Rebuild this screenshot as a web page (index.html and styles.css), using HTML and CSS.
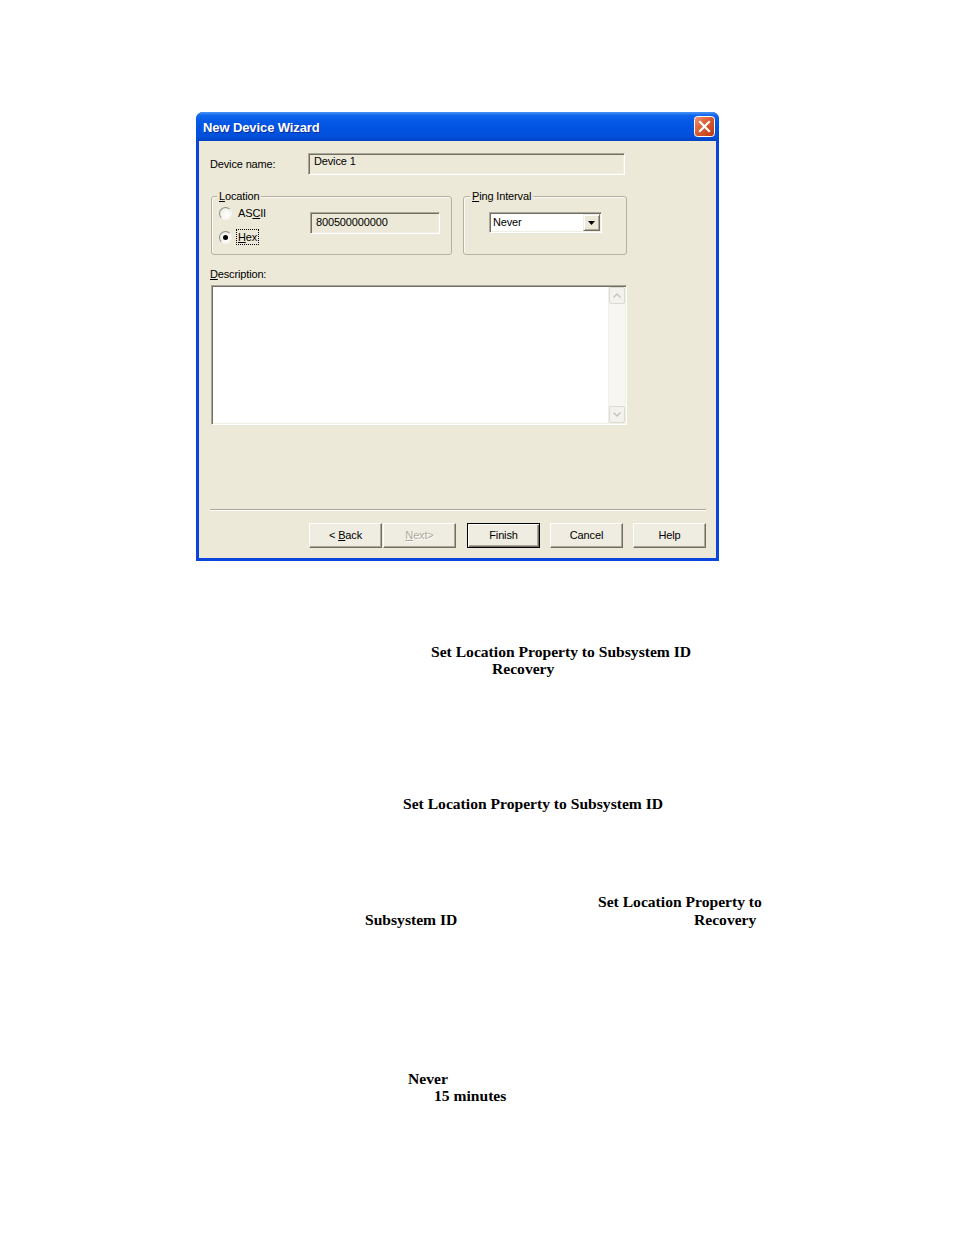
FILE: index.html
```html
<!DOCTYPE html>
<html>
<head>
<meta charset="utf-8">
<title>New Device Wizard</title>
<link rel="stylesheet" href="styles.css">
</head>
<body>
<div class="page">
  <div class="dialog">
    <div class="titlebar">
      <span class="title">New Device Wizard</span>
      <span class="close">
        <svg width="21" height="21" viewBox="0 0 21 21">
          <defs>
            <linearGradient id="cg" x1="0" y1="0" x2="1" y2="1">
              <stop offset="0" stop-color="#EE9470"/>
              <stop offset="0.5" stop-color="#D9582F"/>
              <stop offset="1" stop-color="#B83A14"/>
            </linearGradient>
          </defs>
          <rect x="0.5" y="0.5" width="20" height="20" rx="3" fill="url(#cg)" stroke="#ffffff"/>
          <path d="M6 6 L15 15 M15 6 L6 15" stroke="#ffffff" stroke-width="2.2" stroke-linecap="square"/>
        </svg>
      </span>
    </div>
    <div class="body">
      <div class="row-name">
        <span class="lbl-name">Device name:</span>
        <div class="textbox name-box">Device 1</div>
      </div>
      <div class="groups">
        <div class="group loc">
          <span class="legend"><u>L</u>ocation</span>
          <div class="loc-grid">
            <div class="radios">
              <div class="radio-row"><span class="radio"></span><span class="rlabel">AS<u>C</u>II</span></div>
              <div class="radio-row"><span class="radio checked"></span><span class="rlabel focus"><u>H</u>ex</span></div>
            </div>
            <div class="textbox loc-box">800500000000</div>
          </div>
        </div>
        <div class="group ping">
          <span class="legend"><u>P</u>ing Interval</span>
          <div class="combo">
            <span class="combo-text">Never</span>
            <span class="combo-btn">
              <svg width="7" height="4" viewBox="0 0 7 4"><path d="M0 0 H7 L3.5 4 Z" fill="#000"/></svg>
            </span>
          </div>
        </div>
      </div>
      <div class="desc-label"><u>D</u>escription:</div>
      <div class="textarea">
        <div class="ta-content"></div>
        <div class="scrollbar">
          <span class="sb-btn">
            <svg width="8" height="5" viewBox="0 0 8 5"><path d="M0.5 4.5 L4 1 L7.5 4.5" fill="none" stroke="#C4C2B6" stroke-width="1.3"/></svg>
          </span>
          <span class="sb-track"></span>
          <span class="sb-btn">
            <svg width="8" height="5" viewBox="0 0 8 5"><path d="M0.5 0.5 L4 4 L7.5 0.5" fill="none" stroke="#C4C2B6" stroke-width="1.3"/></svg>
          </span>
        </div>
      </div>
      <div class="separator"></div>
      <div class="buttons">
        <div class="btn-pair">
          <span class="btn"><span>&lt; <u>B</u>ack</span></span>
          <span class="btn disabled"><span><u>N</u>ext&gt;</span></span>
        </div>
        <span class="btn default">Finish</span>
        <span class="btn">Cancel</span>
        <span class="btn">Help</span>
      </div>
    </div>
  </div>

  <div class="doc">
    <div class="blk b1">
      <div class="ln l-431">Set Location Property to Subsystem ID</div>
      <div class="ln l-492">Recovery</div>
    </div>
    <div class="blk b2">
      <div class="ln l-403">Set Location Property to Subsystem ID</div>
    </div>
    <div class="blk b3">
      <div class="ln l-598">Set Location Property to</div>
      <div class="ln split">
        <span class="split-a">Subsystem ID</span>
        <span class="split-b">Recovery</span>
      </div>
    </div>
    <div class="blk b4">
      <div class="ln l-408">Never</div>
      <div class="ln l-434">15 minutes</div>
    </div>
  </div>
</div>
</body>
</html>
```

FILE: styles.css
```css
html, body {
  margin: 0;
  padding: 0;
  background: #ffffff;
}

.page {
  width: 954px;
  min-height: 1235px;
  padding-top: 112px;
  box-sizing: border-box;
}

/* ---------- dialog ---------- */
.dialog {
  margin-left: 196px;
  width: 523px;
  height: 449px;
  display: flex;
  flex-direction: column;
  background: #0A46DB;
  border-radius: 7px 7px 0 0;
  overflow: hidden;
  font-family: "Liberation Sans", Arial, sans-serif;
  font-size: 11px;
  letter-spacing: -0.15px;
  color: #000;
}

.titlebar {
  height: 29px;
  flex: none;
  display: flex;
  align-items: center;
  justify-content: space-between;
  padding: 0 4px 0 7px;
  background: linear-gradient(#4A93F6 0%, #1165EC 12%, #0458E6 35%, #0053E1 60%, #014FDA 85%, #0042C4 100%);
}

.title {
  color: #ffffff;
  font-size: 13px;
  font-weight: bold;
  letter-spacing: -0.1px;
  padding-top: 2px;
  text-shadow: 1px 1px 0 #0A2E9C;
}

.close {
  display: flex;
  width: 21px;
  height: 21px;
}

.body {
  flex: 1;
  margin: 0 3px 3px;
  background: #ECE9D8;
  padding: 12px 10px 10px 11px;
  display: flex;
  flex-direction: column;
}

.row-name {
  display: flex;
  align-items: center;
  height: 22px;
}

.lbl-name {
  width: 98px;
}

.textbox {
  box-sizing: border-box;
  height: 22px;
  border: 1px solid;
  border-color: #ACA899 #ffffff #ffffff #ACA899;
  box-shadow: inset 1px 1px #716F64, inset -1px -1px #F1EFE2;
  background: #ECE9D8;
  padding: 3px 0 0 5px;
  line-height: 13px;
}

.name-box {
  width: 317px;
  padding-top: 1px;
}

.groups {
  display: flex;
  margin-top: 21px;
  gap: 11px;
  padding-left: 1px;
}

.group {
  position: relative;
  box-sizing: border-box;
  height: 59px;
  border: 1px solid #B4B1A2;
  border-radius: 3px;
  box-shadow: inset 1px 1px #FAF9F5;
}

.group.loc {
  width: 241px;
  padding: 9px 0 0 7px;
}

.group.ping {
  width: 164px;
  padding: 15px 0 0 25px;
}

.legend {
  position: absolute;
  top: -7px;
  left: 5px;
  padding: 0 2px;
  line-height: 13px;
  background: #ECE9D8;
}

.ping .legend {
  left: 6px;
}

.loc-grid {
  display: grid;
  grid-template-columns: 91px 130px;
}

.radios {
  display: flex;
  flex-direction: column;
  gap: 10px;
}

.radio-row {
  display: flex;
  align-items: center;
  height: 14px;
}

.radio {
  box-sizing: border-box;
  width: 13px;
  height: 13px;
  border-radius: 50%;
  border: 1px solid;
  border-color: #8F8D82 #F6F5F0 #F6F5F0 #8F8D82;
  background: radial-gradient(circle at 62% 62%, #ffffff 0%, #F4F3EE 55%, #DEDCD1 100%);
  display: flex;
  align-items: center;
  justify-content: center;
}

.radio.checked::after {
  content: "";
  width: 5px;
  height: 5px;
  border-radius: 50%;
  background: #000;
}

.rlabel {
  margin-left: 4px;
  padding: 1px 1px 0;
  line-height: 13px;
  border: 1px solid transparent;
}

.rlabel.focus {
  border: 1px dotted #000;
}

.loc-box {
  margin-top: 6px;
  width: 130px;
  height: 22px;
  padding-top: 3px;
}

.combo {
  box-sizing: border-box;
  width: 113px;
  height: 21px;
  display: flex;
  align-items: center;
  justify-content: space-between;
  background: #ffffff;
  border: 1px solid;
  border-color: #ACA899 #ffffff #ffffff #ACA899;
  box-shadow: inset 1px 1px #716F64, inset -1px -1px #F1EFE2;
  padding: 1px;
}

.combo-text {
  padding-left: 2px;
  line-height: 13px;
}

.combo-btn {
  box-sizing: border-box;
  width: 17px;
  height: 17px;
  display: flex;
  align-items: center;
  justify-content: center;
  background: #ECE9D8;
  border: 1px solid;
  border-color: #F1EFE2 #716F64 #716F64 #F1EFE2;
  box-shadow: inset 1px 1px #ffffff, inset -1px -1px #ACA899;
}

.desc-label {
  margin-top: 13px;
  line-height: 13px;
}

.textarea {
  margin-top: 4px;
  margin-left: 1px;
  box-sizing: border-box;
  width: 416px;
  height: 140px;
  display: flex;
  background: #ffffff;
  border: 1px solid;
  border-color: #ACA899 #ffffff #ffffff #ACA899;
  box-shadow: inset 1px 1px #716F64, inset -1px -1px #F1EFE2;
  padding: 1px;
}

.ta-content {
  flex: 1;
}

.scrollbar {
  width: 16px;
  display: flex;
  flex-direction: column;
  background: #F7F6F2;
  border-left: 1px solid #F0EFEA;
}

.sb-btn {
  box-sizing: border-box;
  height: 17px;
  display: flex;
  align-items: center;
  justify-content: center;
  border: 1px solid #DCDBD3;
  border-radius: 2px;
  background: #F3F2EC;
}

.sb-track {
  flex: 1;
}

.separator {
  margin-top: 84px;
  height: 1px;
  border-top: 1px solid #ACA899;
  background: #ffffff;
  width: 496px;
}

.buttons {
  margin-top: 12px;
  display: flex;
  justify-content: flex-end;
  gap: 10px;
}

.btn-pair {
  display: flex;
  gap: 1px;
  margin-right: 1px;
}

.btn {
  box-sizing: border-box;
  width: 73px;
  height: 25px;
  display: flex;
  align-items: center;
  justify-content: center;
  background: #EFEDE2;
  border: 1px solid;
  border-color: #ffffff #716F64 #716F64 #ffffff;
  box-shadow: inset -1px -1px #ACA899;
  padding-bottom: 1px;
  white-space: pre;
}

.btn.default {
  border-color: #000;
  box-shadow: inset 1px 1px #ffffff, inset -1px -1px #716F64, inset -2px -2px #ACA899;
}

.btn.disabled {
  color: #ACA899;
  text-shadow: 1px 1px 0 #ffffff;
}

/* ---------- document text ---------- */
.doc {
  font-family: "Liberation Serif", "Times New Roman", serif;
  font-weight: bold;
  font-size: 15.6px;
  line-height: 17px;
  color: #000;
}

.b1 { margin-top: 82px; }
.b2 { margin-top: 118px; }
.b3 { margin-top: 81px; }
.b4 { margin-top: 142px; }

.ln { white-space: nowrap; }
.l-431 { padding-left: 431px; }
.l-492 { padding-left: 492px; }
.l-403 { padding-left: 403px; }
.l-598 { padding-left: 598px; }
.l-408 { padding-left: 408px; }
.l-434 { padding-left: 434px; }

.split {
  display: grid;
  grid-template-columns: 694px auto;
  margin-top: 1px;
}

.split-a { padding-left: 365px; }
```
